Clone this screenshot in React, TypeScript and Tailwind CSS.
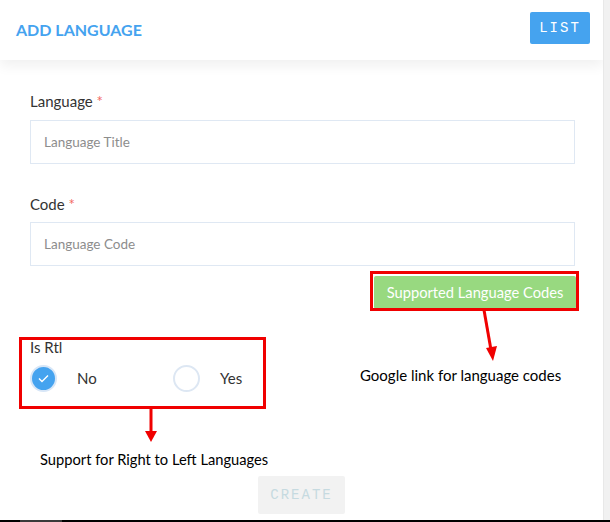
const annotationFont = { fontFamily: "Lato, 'Open Sans', sans-serif" };

const RadioOption = ({ label, checked }: { label: string; checked: boolean }) => (
  <label className="flex items-center gap-[20px]">
    {checked ? (
      <span className="flex h-[27px] w-[27px] items-center justify-center rounded-full border-2 border-[#d7e6f7] bg-[#45a3ef]">
        <svg width="11" height="9" viewBox="0 0 11 9" fill="none">
          <path d="M1 4.5 L4 7.5 L10 1.5" stroke="#fff" strokeWidth="1.4" />
        </svg>
      </span>
    ) : (
      <span className="h-[27px] w-[27px] rounded-full border-2 border-[#dde7f3] bg-white" />
    )}
    <span className="text-[15px] text-[#333]">{label}</span>
  </label>
);

export default function App() {
  return (
    <div
      className="relative flex h-[522px] w-[610px] overflow-hidden bg-white"
      style={{ fontFamily: "Lato, 'Open Sans', sans-serif" }}
    >
      <main className="flex w-[603px] flex-col">
        <header className="flex h-[60px] items-center justify-between pl-[16px] pr-[13px] shadow-[0_6px_12px_rgba(0,0,0,0.06)]">
          <h1 className="text-[16px] font-bold text-[#45a3ef]">ADD LANGUAGE</h1>
          <button
            type="button"
            className="mb-[4px] h-[32px] w-[60px] rounded-[2px] bg-[#45a3ef] text-[14px] tracking-[2px] text-white"
            style={{ fontFamily: "'Liberation Mono', monospace" }}
          >
            LIST
          </button>
        </header>

        <form className="flex flex-col px-[30px] pr-[28px] pt-[30px]">
          <label className="text-[15px] text-[#333]">
            Language <span className="text-[#f2685f]">*</span>
          </label>
          <input
            placeholder="Language Title"
            className="mt-[7px] h-[44px] border border-[#dfe8f3] px-[13px] text-[13.5px] placeholder:text-[#8d8d8d]"
          />

          <label className="mt-[29px] text-[15px] text-[#333]">
            Code <span className="text-[#f2685f]">*</span>
          </label>
          <input
            placeholder="Language Code"
            className="mt-[7px] h-[44px] border border-[#dfe8f3] px-[13px] text-[13.5px] placeholder:text-[#8d8d8d]"
          />

          <div className="mt-[10px] flex justify-end">
            <button
              type="button"
              className="-mr-[1px] h-[33px] w-[202px] rounded-[2px] bg-[#98d980] text-[14.7px] text-white"
            >
              Supported Language Codes
            </button>
          </div>

          <div className="mt-[29px] flex flex-col">
            <span className="text-[15px] leading-[18px] text-[#333]">Is Rtl</span>
            <div className="mt-[9px] grid grid-cols-[143px_auto]">
              <RadioOption label="No" checked />
              <RadioOption label="Yes" checked={false} />
            </div>
          </div>

          <div className="mt-[84px] flex justify-center">
            <button
              type="button"
              className="ml-[-2px] h-[38px] w-[87px] rounded-[2px] bg-[#f2f2f2] text-[14px] tracking-[2px] text-[#c6dae0]"
              style={{ fontFamily: "'Liberation Mono', monospace" }}
            >
              CREATE
            </button>
          </div>
        </form>
      </main>
      <div className="w-[7px] border-l border-[#e8e8e8] bg-[#f1f1f1]" />

      {/* annotations drawn over the page */}
      <div className="absolute left-[370px] top-[271px] h-[40px] w-[209px] border-[3px] border-[#f00000]" />
      <svg className="absolute left-[478px] top-[308px]" width="24" height="56" viewBox="0 0 24 56">
        <line x1="6" y1="2" x2="13" y2="42" stroke="#f00000" strokeWidth="3" />
        <polygon points="8,40 19,38 15,53" fill="#f00000" />
      </svg>
      <p className="absolute left-[360px] top-[364px] text-[15px] text-black" style={annotationFont}>
        Google link for language codes
      </p>

      <div className="absolute left-[19px] top-[337px] h-[72px] w-[247px] border-[3px] border-[#f00000]" />
      <svg className="absolute left-[144px] top-[407px]" width="14" height="36" viewBox="0 0 14 36">
        <line x1="7" y1="0" x2="7" y2="26" stroke="#f00000" strokeWidth="3" />
        <polygon points="1,24 13,24 7,35" fill="#f00000" />
      </svg>
      <p className="absolute left-[40px] top-[448px] text-[14.7px] text-black" style={annotationFont}>
        Support for Right to Left Languages
      </p>

      <div className="absolute bottom-0 left-0 h-[2px] w-full bg-black" />
      <div className="absolute bottom-0 left-[20px] h-[2px] w-[42px] bg-[#3a3a3a]" />
    </div>
  );
}
